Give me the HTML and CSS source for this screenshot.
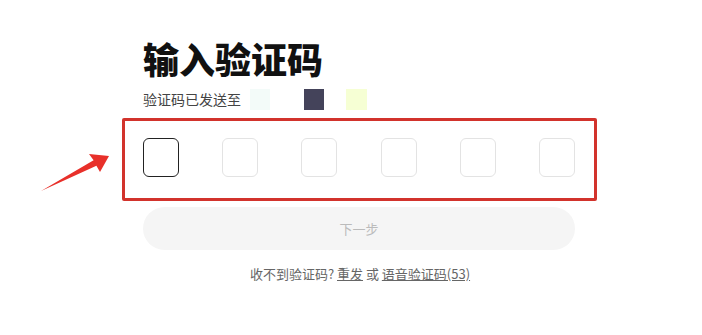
FILE: index.html
```html
<!DOCTYPE html>
<html lang="zh">
<head>
    <meta charset="UTF-8">
    <title>输入验证码</title>
    <link rel="stylesheet" href="styles.css">
</head>
<body>
    <div class="page">
        <h1 class="title">输入验证码</h1>
        <div class="sent-to">
            <span>验证码已发送至</span>
            <span class="mask mask-light"></span>
            <span class="mask mask-dark"></span>
            <span class="mask mask-yellow"></span>
        </div>

        <div class="code-frame">
            <div class="code-row">
                <div class="code-cell active"></div>
                <div class="code-cell"></div>
                <div class="code-cell"></div>
                <div class="code-cell"></div>
                <div class="code-cell"></div>
                <div class="code-cell"></div>
            </div>
        </div>

        <button class="next-btn" disabled>下一步</button>

        <div class="resend">
            收不到验证码? <a href="#">重发</a> 或 <a href="#">语音验证码(53)</a>
        </div>
    </div>

    <!-- 标注箭头 -->
    <svg class="arrow" width="90" height="60" viewBox="0 0 90 60">
        <path d="M11 51 L63.6 20.3 L59 14 L79 16 L70 32 L66.4 25.7 Z" fill="#e8302a"/>
    </svg>
</body>
</html>
```

FILE: styles.css
```css
body {
    margin: 0;
    background-color: #fff;
    font-family: 'Noto Sans CJK SC', 'Liberation Sans', sans-serif;
    width: 702px;
    height: 335px;
    position: relative;
    overflow: hidden;
}
.page {
    padding: 37px 0 0 143px;
    width: 432px;
}
.title {
    margin: 0;
    font-size: 36px;
    line-height: 42px;
    font-weight: 900;
    color: #111;
}
.sent-to {
    display: flex;
    align-items: center;
    height: 22px;
    margin-top: 9px;
    font-size: 14px;
    color: #444;
}
.mask {
    display: inline-block;
    width: 20px;
    height: 21px;
}
.mask-light {
    margin-left: 9px;
    background-color: #f3fbf9;
}
.mask-dark {
    margin-left: 34px;
    background-color: #44435a;
}
.mask-yellow {
    margin-left: 22px;
    width: 21px;
    background-color: #f6ffd4;
}
.code-frame {
    margin: 8px 0 0 -21px;
    border: 3px solid #d2332c;
    border-radius: 2px;
    padding: 17px 0 0 18px;
    width: 451px;
    height: 60px;
}
.code-row {
    display: flex;
    justify-content: space-between;
    width: 432px;
}
.code-cell {
    width: 36px;
    height: 39px;
    box-sizing: border-box;
    border: 1px solid #e3e3e3;
    border-radius: 6px;
}
.code-cell.active {
    border-color: #222;
}
.next-btn {
    display: block;
    width: 432px;
    height: 43px;
    margin-top: 6px;
    border: none;
    border-radius: 22px;
    background-color: #f5f5f5;
    color: #bbb;
    font-family: inherit;
    font-size: 13px;
}
.resend {
    margin-top: 14px;
    text-align: center;
    font-size: 13px;
    color: #666;
    padding-left: 2px;
}
.resend a {
    color: #666;
    text-decoration: underline;
}
.arrow {
    position: absolute;
    left: 30px;
    top: 140px;
}
```
